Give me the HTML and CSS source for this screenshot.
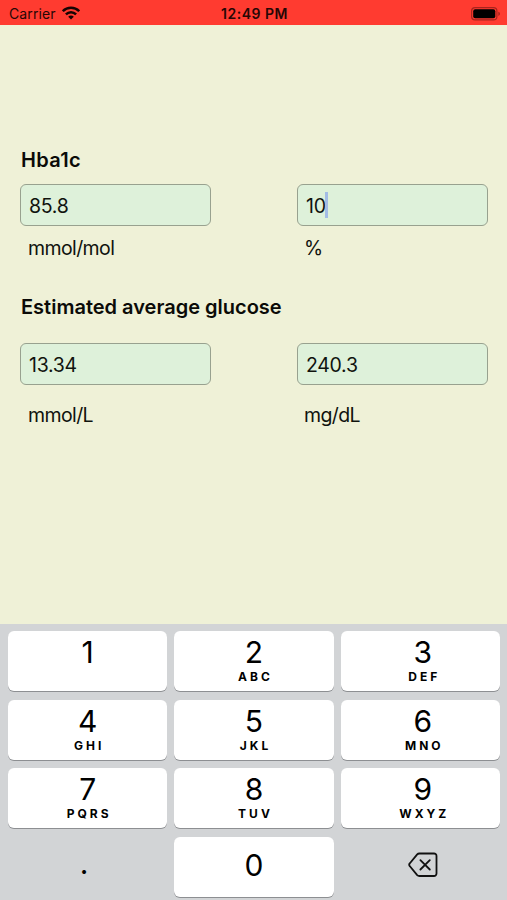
FILE: index.html
```html
<!DOCTYPE html>
<html lang="en">
<head>
    <meta charset="UTF-8">
    <meta name="viewport" content="width=device-width, initial-scale=1.0">
    <title>Hba1c</title>
    <link rel="stylesheet" href="styles.css">
</head>
<body>
    <header class="status-bar">
        <div class="carrier">
            <span>Carrier</span>
            <svg class="wifi" width="18" height="14" viewBox="0 0 18 14" fill="none" stroke="#160403" stroke-width="2.5">
                <path d="M.8 5.2C5.3.6 12.7.6 17.2 5.2"/>
                <path d="M3.9 8.3c2.9-2.9 7.3-2.9 10.2 0"/>
                <path d="M6.2 10.7c1.6-1.5 4-1.5 5.6 0L9 13.5z" fill="#160403" stroke="none"/>
            </svg>
        </div>
        <div class="time">12:49 PM</div>
        <div class="battery">
            <svg width="30" height="14" viewBox="0 0 30 14">
                <rect x=".6" y=".6" width="25.3" height="12.3" rx="3.5" fill="none" stroke="#a8241d" stroke-width="1.2"/>
                <rect x="2.2" y="2.2" width="22.1" height="9.1" rx="2" fill="#000"/>
                <path d="M27.3 4.8c2.2.6 2.2 3.5 0 4.1z" fill="#a8241d"/>
            </svg>
        </div>
    </header>

    <main class="converter">
        <section class="group hba1c">
            <h2>Hba1c</h2>
            <div class="fields">
                <label class="field">
                    <input type="text" value="85.8">
                    <span class="unit">mmol/mol</span>
                </label>
                <label class="field">
                    <input type="text" value="10">
                    <i class="cursor"></i>
                    <span class="unit">%</span>
                </label>
            </div>
        </section>
        <section class="group glucose">
            <h2>Estimated average glucose</h2>
            <div class="fields">
                <label class="field">
                    <input type="text" value="13.34">
                    <span class="unit">mmol/L</span>
                </label>
                <label class="field">
                    <input type="text" value="240.3">
                    <span class="unit">mg/dL</span>
                </label>
            </div>
        </section>
    </main>

    <div class="keyboard">
        <div class="key"><b>1</b></div>
        <div class="key"><b>2</b><small>ABC</small></div>
        <div class="key"><b>3</b><small>DEF</small></div>
        <div class="key"><b>4</b><small>GHI</small></div>
        <div class="key"><b>5</b><small>JKL</small></div>
        <div class="key"><b>6</b><small>MNO</small></div>
        <div class="key"><b>7</b><small>PQRS</small></div>
        <div class="key"><b>8</b><small>TUV</small></div>
        <div class="key"><b>9</b><small>WXYZ</small></div>
        <div class="key flat dot"><b>.</b></div>
        <div class="key zero"><b>0</b></div>
        <div class="key flat">
            <svg width="30" height="26" viewBox="0 0 30 26" fill="none" stroke="#111" stroke-width="1.8" stroke-linecap="round" stroke-linejoin="round">
                <path d="M11.3 1.5H26A2.5 2.5 0 0 1 28.5 4v17.5A2.5 2.5 0 0 1 26 24H11.300a3 3 0 0 1-2.100-.9L1.900 14.300a2.300 2.300 0 0 1 0-3.100L9.200 2.400a3 3 0 0 1 2.100-.9z"/>
                <path d="M12.400 8.100l9.400 9.400M21.800 8.100l-9.400 9.400"/>
            </svg>
        </div>
    </div>
</body>
</html>
```
FILE: styles.css
```css
* {
    box-sizing: border-box;
}
body {
    margin: 0;
    height: 900px;
    display: flex;
    flex-direction: column;
    overflow: hidden;
    background: #eff1d7;
    color: #10130e;
    font-family: Inter, "Liberation Sans", sans-serif;
}

/* status bar */
.status-bar {
    height: 25px;
    padding: 2px 6px 0 9px;
    display: grid;
    grid-template-columns: 1fr auto 1fr;
    align-items: center;
    background: #ff3b30;
    color: #260705;
    font-size: 14px;
}
.carrier {
    display: flex;
    align-items: center;
    gap: 6px;
    letter-spacing: 0.1px;
}
.wifi {
    margin-top: -2px;
}
.time {
    margin-left: -1px;
    font-weight: 600;
    letter-spacing: 0.5px;
}
.battery {
    display: flex;
    justify-content: flex-end;
}

/* form */
.converter {
    flex: 1;
    padding: 122px 19px 0 20px;
}
.group h2 {
    margin: 0 0 0 1px;
    color: #0b0b08;
    font-size: 20px;
    line-height: 26px;
    font-weight: 600;
}
.hba1c h2 {
    letter-spacing: 0.3px;
}
.fields {
    display: flex;
    justify-content: space-between;
}
.field {
    position: relative;
    width: 191px;
}
.field input {
    display: block;
    width: 100%;
    height: 42px;
    padding: 1px 8px 0;
    border: 1.5px solid #98a18f;
    border-radius: 6px;
    background: #def1da;
    color: #10130e;
    font: inherit;
    font-size: 19.5px;
    letter-spacing: -0.3px;
    outline: none;
}
.unit {
    display: block;
    padding-left: 8px;
    font-size: 19.5px;
    line-height: 24px;
    letter-spacing: -0.6px;
}
.field + .field .unit {
    padding-left: 7px;
}
.hba1c .fields {
    margin-top: 11px;
}
.hba1c .unit {
    margin-top: 10px;
}
.glucose {
    margin-top: 34px;
}
.glucose .fields {
    margin-top: 23px;
}
.glucose .unit {
    margin-top: 18px;
}
.cursor {
    position: absolute;
    left: 28px;
    top: 8px;
    width: 3px;
    height: 26px;
    background: #a3bce5;
}

/* number pad */
.keyboard {
    height: 276px;
    padding: 7px 7px 3px 8px;
    display: grid;
    grid-template-columns: repeat(3, 1fr);
    grid-template-rows: repeat(4, 1fr);
    gap: 8.5px 7px;
    background: #d2d4d6;
}
.key {
    display: flex;
    flex-direction: column;
    align-items: center;
    padding-top: 3px;
    border-radius: 6px;
    background: #fff;
    box-shadow: 0 1px 0 #8d8f92;
    color: #000;
}
.key:nth-child(3n) {
    padding-left: 5px;
}
.key b {
    font-size: 30px;
    line-height: 37px;
    font-weight: 400;
}
.key small {
    margin-right: -3px;
    font-size: 12px;
    line-height: 12px;
    font-weight: 700;
    letter-spacing: 3px;
}
.key.zero,
.key.flat {
    justify-content: center;
    padding-top: 0;
}
.key.zero {
    padding-bottom: 2px;
}
.key.flat {
    padding-bottom: 3px;
    background: none;
    box-shadow: none;
}
.key.dot {
    padding-right: 7px;
    padding-bottom: 7px;
}
```
